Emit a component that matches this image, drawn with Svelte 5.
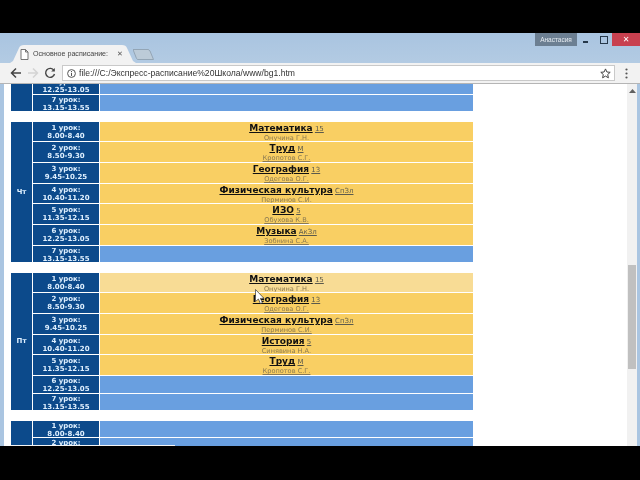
<script>
  const times = ['8.00-8.40', '8.50-9.30', '9.45-10.25', '10.40-11.20', '11.35-12.15', '12.25-13.05', '13.15-13.55'];

  const days = [
    {
      name: '',
      start: 5,
      lessons: [null, null]
    },
    {
      name: 'Чт',
      lessons: [
        { title: 'Математика', room: '15', teacher: 'Онучина Г.Н.' },
        { title: 'Труд', room: 'М', teacher: 'Кропотов С.Г.' },
        { title: 'География', room: '13', teacher: 'Одегова О.Г.' },
        { title: 'Физическая культура', room: 'СпЗл', teacher: 'Перминов С.И.' },
        { title: 'ИЗО', room: '5', teacher: 'Обухова К.В.' },
        { title: 'Музыка', room: 'АкЗл', teacher: 'Зобнина С.А.' },
        null
      ]
    },
    {
      name: 'Пт',
      lessons: [
        { title: 'Математика', room: '15', teacher: 'Онучина Г.Н.', hover: true },
        { title: 'География', room: '13', teacher: 'Одегова О.Г.' },
        { title: 'Физическая культура', room: 'СпЗл', teacher: 'Перминов С.И.' },
        { title: 'История', room: '5', teacher: 'Синявина Н.А.' },
        { title: 'Труд', room: 'М', teacher: 'Кропотов С.Г.' },
        null,
        null
      ]
    },
    {
      name: '',
      lessons: [null, null]
    }
  ];
</script>

<div class="screen">
  <div class="window">
    <div class="titlebar">
      <div class="tabs">
        <svg class="tab-shape" width="126" height="18" viewBox="0 0 126 18">
          <path d="M0 18 L3 16 L9 3 Q10 0 14 0 L112 0 Q116 0 117 3 L123 16 L126 18 Z" fill="#f2f2f2" />
        </svg>
        <div class="tab">
          <svg width="9" height="11" viewBox="0 0 9 11">
            <path d="M1 .5 H5.5 L8 3 V10.5 H1 Z M5.5 .5 V3 H8" fill="#fff" stroke="#666" stroke-width="0.9" />
          </svg>
          <span class="tab-title">Основное расписание:</span>
          <span class="tab-close">✕</span>
        </div>
        <svg class="newtab" width="21" height="11" viewBox="0 0 21 11">
          <path d="M0 .5 H15 Q16 .5 17 2 L20.5 10.5 H5 Q4 10.5 3.5 9.5 Z" fill="#bccbd8" stroke="#93a5b5" />
        </svg>
      </div>
      <div class="controls">
        <span class="profile">Анастасия</span>
        <svg class="minimize" width="5" height="3" viewBox="0 0 5 3"><rect width="5" height="2" y="1" fill="#26384a" /></svg>
        <svg class="maximize" width="8" height="8" viewBox="0 0 8 8"><rect x=".5" y=".5" width="7" height="7" fill="none" stroke="#26384a" /></svg>
        <span class="close">✕</span>
      </div>
    </div>

    <div class="toolbar">
      <svg class="nav back" width="12" height="12" viewBox="0 0 12 12">
        <path d="M11 6 H2 M6 1.5 L1.5 6 L6 10.5" fill="none" stroke="#444" stroke-width="1.5" />
      </svg>
      <svg class="nav forward" width="12" height="12" viewBox="0 0 12 12">
        <path d="M1 6 H10 M6 1.5 L10.5 6 L6 10.5" fill="none" stroke="#d4d4d4" stroke-width="1.5" />
      </svg>
      <svg class="nav reload" width="12" height="12" viewBox="0 0 12 12">
        <path d="M10 3.5 A4.5 4.5 0 1 0 10.5 7" fill="none" stroke="#444" stroke-width="1.4" />
        <path d="M10.8 1 V4.6 H7.2 Z" fill="#444" />
      </svg>
      <div class="omnibox">
        <svg width="9" height="9" viewBox="0 0 9 9">
          <circle cx="4.5" cy="4.5" r="3.9" fill="none" stroke="#555" />
          <path d="M4.5 2 V3 M4.5 3.8 V7" stroke="#555" />
        </svg>
        <span class="url">file:///C:/Экспресс-расписание%20Школа/www/bg1.htm</span>
        <svg class="star" width="11" height="11" viewBox="0 0 11 11">
          <path d="M5.5 .9 L6.9 4 L10.2 4.3 L7.7 6.5 L8.4 9.8 L5.5 8.1 L2.6 9.8 L3.3 6.5 L.8 4.3 L4.1 4 Z" fill="none" stroke="#444" />
        </svg>
      </div>
      <svg class="menu" width="3" height="11" viewBox="0 0 3 11">
        <circle cx="1.5" cy="1.5" r="1.1" fill="#555" />
        <circle cx="1.5" cy="5.5" r="1.1" fill="#555" />
        <circle cx="1.5" cy="9.5" r="1.1" fill="#555" />
      </svg>
    </div>

    <div class="viewport">
      <div class="page">
        {#each days as day}
          <div class="day">
            <div class="day-name">{day.name}</div>
            <div class="rows">
              {#each day.lessons as lesson, i}
                <div class="row" class:empty={!lesson}>
                  <div class="time">
                    {(day.start ?? 0) + i + 1} урок:<br />{times[(day.start ?? 0) + i]}
                  </div>
                  {#if lesson}
                    <div class="cell" class:hover={lesson.hover}>
                      <div class="subject"><u class="title">{lesson.title}</u> <u class="room">{lesson.room}</u></div>
                      <u class="teacher">{lesson.teacher}</u>
                    </div>
                  {:else}
                    <div class="cell blank"></div>
                  {/if}
                </div>
              {/each}
            </div>
          </div>
        {/each}
      </div>
      <div class="scrollbar">
        <svg class="scroll-up" width="7" height="4" viewBox="0 0 7 4"><path d="M3.5 0 L7 4 H0 Z" fill="#606060" /></svg>
        <div class="thumb"></div>
      </div>
      <div class="status"></div>
      <svg class="cursor" width="11" height="16" viewBox="0 0 11 16">
        <path d="M.5 .5 V12.5 L3.4 10 L5.4 14.6 L7.4 13.7 L5.4 9.4 H9 Z" fill="#fff" stroke="#333" stroke-width="0.7" />
      </svg>
    </div>
  </div>
</div>

<style>
  :global(body) {
    margin: 0;
    background: #000;
  }

  .screen {
    width: 640px;
    height: 480px;
    padding: 33px 0 34px;
    box-sizing: border-box;
    background: #000;
    font-family: "DejaVu Sans", Verdana, sans-serif;
    overflow: hidden;
    filter: blur(0.35px);
  }

  .window {
    height: 413px;
    display: flex;
    flex-direction: column;
    background: #aac5e1;
    padding: 0 3px 0 4px;
    box-sizing: border-box;
  }

  .titlebar {
    height: 30px;
    margin-left: -4px;
    margin-right: -3px;
    display: flex;
    justify-content: space-between;
    align-items: flex-start;
    flex-shrink: 0;
    background: linear-gradient(#a9c4e0, #b3cbe3);
  }

  .tabs {
    position: relative;
    width: 160px;
    height: 30px;
  }

  .tab-shape {
    position: absolute;
    left: 10px;
    top: 12px;
  }

  .tab {
    position: absolute;
    left: 20px;
    top: 14px;
    display: flex;
    align-items: center;
    gap: 4px;
    height: 14px;
  }

  .tab-title {
    font-family: "Liberation Sans", sans-serif;
    font-size: 7.1px;
    color: #444;
    white-space: nowrap;
  }

  .tab-close {
    margin-left: 5px;
    font-size: 7px;
    font-weight: bold;
    color: #555;
  }

  .newtab {
    position: absolute;
    left: 133px;
    top: 16px;
  }

  .controls {
    display: flex;
    align-items: center;
    height: 13px;
  }

  .profile {
    width: 42px;
    height: 13px;
    background: #6c7f92;
    color: #e6ecf2;
    font-family: "Liberation Sans", sans-serif;
    font-size: 6.5px;
    line-height: 13px;
    text-align: center;
  }

  .minimize {
    margin-left: 6px;
    margin-top: 3px;
  }

  .maximize {
    margin-left: 12px;
  }

  .close {
    margin-left: 4px;
    width: 28px;
    height: 13px;
    background: #c8404f;
    color: #fff;
    font-size: 8px;
    line-height: 13px;
    text-align: center;
    padding-right: 0;
  }

  .toolbar {
    height: 21px;
    margin: 0 -3px 0 -4px;
    display: flex;
    align-items: center;
    flex-shrink: 0;
    background: #f2f2f2;
    border-bottom: 1px solid #b5b5b5;
    box-sizing: border-box;
    padding-left: 10px;
  }

  .nav {
    margin-right: 5px;
  }

  .omnibox {
    margin-left: 1px;
    width: 553px;
    height: 16px;
    box-sizing: border-box;
    background: #fff;
    border: 1px solid #c9c9c9;
    display: flex;
    align-items: center;
    padding: 0 3px 0 4px;
    gap: 3px;
  }

  .url {
    font-family: "Liberation Sans", sans-serif;
    font-size: 8.6px;
    color: #333;
    white-space: nowrap;
  }

  .star {
    margin-left: auto;
  }

  .menu {
    margin-left: 10px;
  }

  .viewport {
    position: relative;
    flex: 1;
    min-height: 0;
    display: flex;
    background: #fff;
    overflow: hidden;
  }

  .page {
    flex: 1;
    margin-top: -7px;
    padding-left: 7px;
    min-width: 0;
  }

  .day {
    display: flex;
    gap: 1px;
    width: 462px;
    margin-bottom: 10.5px;
    color: #dff0ff;
    font-weight: bold;
    font-size: 7px;
    line-height: 8px;
    text-align: center;
  }

  .day-name {
    width: 21px;
    flex-shrink: 0;
    background: #0c4a8b;
    display: flex;
    align-items: center;
    justify-content: center;
  }

  .rows {
    flex: 1;
    display: flex;
    flex-direction: column;
    gap: 1px;
  }

  .row {
    display: flex;
    gap: 1px;
    height: 19.7px;
  }

  .row.empty {
    height: 16.5px;
  }

  .time {
    width: 66px;
    flex-shrink: 0;
    background: #0c4a8b;
    padding-top: 2px;
    box-sizing: border-box;
  }

  .row.empty .time {
    padding-top: 1px;
  }

  .cell {
    flex: 1;
    background: #f9cf63;
    color: #8b7a52;
    font-weight: normal;
    overflow: hidden;
  }

  .cell.hover {
    background: #f8dc95;
  }

  .cell.blank {
    background: #699fe0;
  }

  .subject {
    height: 12px;
    line-height: 13px;
    color: #111;
  }

  .title {
    font-size: 9px;
    font-weight: bold;
  }

  .room {
    font-size: 7px;
    color: #5c5a4c;
  }

  .teacher {
    display: block;
    font-size: 6.6px;
    line-height: 8px;
  }

  .scrollbar {
    position: relative;
    width: 10px;
    flex-shrink: 0;
    background: #f1f1f1;
  }

  .scroll-up {
    position: absolute;
    left: 2px;
    top: 5px;
  }

  .thumb {
    position: absolute;
    left: 1px;
    right: 1px;
    top: 181px;
    height: 104px;
    background: #c0c0c0;
  }

  .status {
    position: absolute;
    left: 6px;
    bottom: 0;
    width: 165px;
    height: 1px;
    background: #f4f4f4;
  }

  .cursor {
    position: absolute;
    left: 251px;
    top: 205px;
  }
</style>
